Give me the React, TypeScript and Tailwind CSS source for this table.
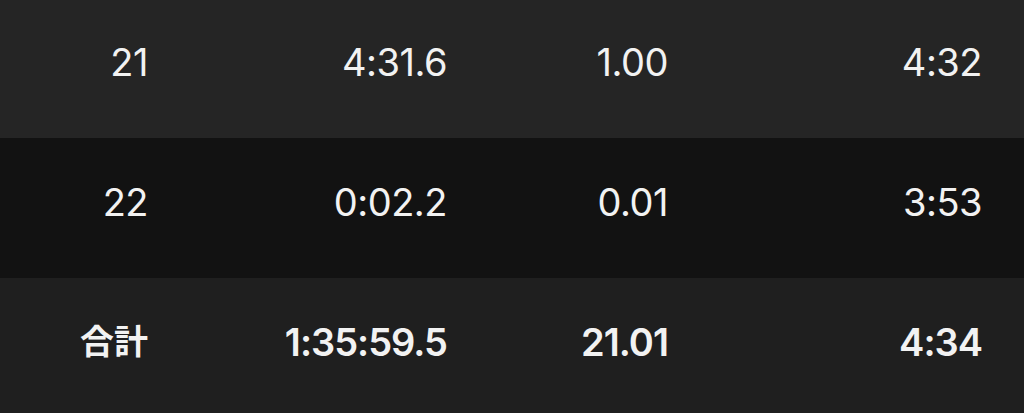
import React from "react";

const rows = [
  { cells: ["21", "4:31.6", "1.00", "4:32"], bg: "bg-[#252525]", bold: false, h: "h-[138px]", pt: "pt-[43px]" },
  { cells: ["22", "0:02.2", "0.01", "3:53"], bg: "bg-[#121212]", bold: false, h: "h-[140px]", pt: "pt-[45px]" },
  { cells: ["合計", "1:35:59.5", "21.01", "4:34"], bg: "bg-[#1f1f1f]", bold: true, h: "h-[135px]", pt: "pt-[45px]" },
];

export default function App() {
  return (
    <div
      className="w-[1024px] h-[413px] overflow-hidden bg-[#1f1f1f] text-[#f2f2f2]"
      style={{ fontFamily: 'Inter, "Noto Sans CJK JP", sans-serif' }}
    >
      {rows.map((r, i) => (
        <div key={i} className={`${r.bg} ${r.h} flex items-start`}>
          <div
            className={`grid grid-cols-[148px_299px_221px_314px] w-full text-right text-[38px] leading-none ${
              r.bold ? "font-semibold tracking-[-1px]" : "font-normal tracking-[-0.5px]"
            } ${r.pt}`}
          >
            {r.cells.map((c, j) => (
              <div key={j} className={j === 0 && r.bold ? "text-[34px] tracking-normal pt-[2px]" : ""}>
                {c}
              </div>
            ))}
          </div>
        </div>
      ))}
    </div>
  );
}
